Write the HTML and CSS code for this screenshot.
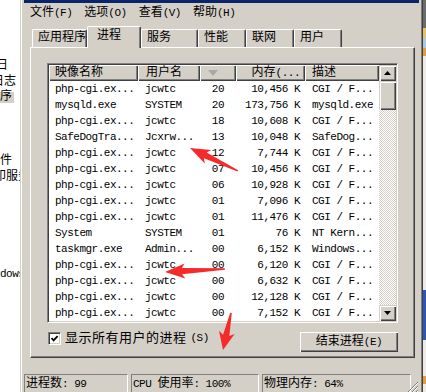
FILE: index.html
```html
<!DOCTYPE html>
<html>
<head>
    <title>Windows 任务管理器</title>
    <link rel="stylesheet" href="styles.css">
</head>
<body>
    <div class="behind">
        <div class="frag cut4">日</div>
        <div class="frag cut8">日志</div>
        <div class="frag"><span class="sel">序</span></div>
        <div class="frag gap-a">件</div>
        <div class="frag cut6">印服务</div>
        <div class="frag gap-b latin">dows</div>
    </div>

    <div class="window">
        <div class="titlebar"></div>

        <div class="menubar">
            <span>文件<span class="k">(F)</span></span>
            <span>选项<span class="k">(O)</span></span>
            <span>查看<span class="k">(V)</span></span>
            <span>帮助<span class="k">(H)</span></span>
        </div>

        <div class="tabs">
            <div class="tab t-app">应用程序</div>
            <div class="tab tab-on">进程</div>
            <div class="tab t-wide">服务</div>
            <div class="tab">性能</div>
            <div class="tab">联网</div>
            <div class="tab">用户</div>
        </div>

        <div class="panel">
            <div class="listbox">
                <div class="grid">
                    <div class="row head">
                        <div class="hc">映像名称</div>
                        <div class="hc">用户名</div>
                        <div class="hc sort">
                            <svg width="10" height="6" viewBox="0 0 10 6"><polygon points="0,0 10,0 5,6" fill="#a8a8a8"/></svg>
                        </div>
                        <div class="hc">内存<span class="k">(...</span></div>
                        <div class="hc">描述</div>
                    </div>
                    <div class="row"><span>php-cgi.ex...</span><span>jcwtc</span><span>20</span><span>10,456 K</span><span>CGI / F...</span></div>
                    <div class="row"><span>mysqld.exe</span><span>SYSTEM</span><span>20</span><span>173,756 K</span><span>mysqld.exe</span></div>
                    <div class="row"><span>php-cgi.ex...</span><span>jcwtc</span><span>18</span><span>10,608 K</span><span>CGI / F...</span></div>
                    <div class="row"><span>SafeDogTra...</span><span>Jcxrw...</span><span>13</span><span>10,048 K</span><span>SafeDog...</span></div>
                    <div class="row"><span>php-cgi.ex...</span><span>jcwtc</span><span>12</span><span>7,744 K</span><span>CGI / F...</span></div>
                    <div class="row"><span>php-cgi.ex...</span><span>jcwtc</span><span>07</span><span>10,456 K</span><span>CGI / F...</span></div>
                    <div class="row"><span>php-cgi.ex...</span><span>jcwtc</span><span>06</span><span>10,928 K</span><span>CGI / F...</span></div>
                    <div class="row"><span>php-cgi.ex...</span><span>jcwtc</span><span>01</span><span>7,096 K</span><span>CGI / F...</span></div>
                    <div class="row"><span>php-cgi.ex...</span><span>jcwtc</span><span>01</span><span>11,476 K</span><span>CGI / F...</span></div>
                    <div class="row"><span>System</span><span>SYSTEM</span><span>01</span><span>76 K</span><span>NT Kern...</span></div>
                    <div class="row"><span>taskmgr.exe</span><span>Admin...</span><span>00</span><span>6,152 K</span><span>Windows...</span></div>
                    <div class="row"><span>php-cgi.ex...</span><span>jcwtc</span><span>00</span><span>6,120 K</span><span>CGI / F...</span></div>
                    <div class="row"><span>php-cgi.ex...</span><span>jcwtc</span><span>00</span><span>6,632 K</span><span>CGI / F...</span></div>
                    <div class="row"><span>php-cgi.ex...</span><span>jcwtc</span><span>00</span><span>12,128 K</span><span>CGI / F...</span></div>
                    <div class="row"><span>php-cgi.ex...</span><span>jcwtc</span><span>00</span><span>7,152 K</span><span>CGI / F...</span></div>
                </div>
                <div class="scrollbar">
                    <div class="sbtn"><svg width="7" height="4" viewBox="0 0 7 4"><polygon points="3.5,0 7,4 0,4" fill="#000"/></svg></div>
                    <div class="thumb"></div>
                    <div class="track"></div>
                    <div class="sbtn"><svg width="7" height="4" viewBox="0 0 7 4"><polygon points="0,0 7,0 3.5,4" fill="#000"/></svg></div>
                </div>
            </div>

            <div class="controls">
                <label class="check">
                    <span class="box"><svg width="7" height="7" viewBox="0 0 7 7"><path d="M0.5 3 L2.6 5.3 L6.6 1" fill="none" stroke="#000" stroke-width="1.8"/></svg></span>
                    显示所有用户的进程<span class="k">(S)</span>
                </label>
                <button class="btn">结束进程<span class="k">(E)</span></button>
            </div>
        </div>

        <div class="status">
            <div class="pane p1">进程数<span class="k">: 99</span></div>
            <div class="pane p2"><span class="k">CPU </span>使用率<span class="k">: 100%</span></div>
            <div class="pane p3">物理内存<span class="k">: 64%</span></div>
            <div class="grip">
                <svg width="12" height="12" viewBox="0 0 12 12">
                    <path d="M11 1 L1 11 M11 5 L5 11 M11 9 L9 11" stroke="#808080" stroke-width="1"/>
                    <path d="M11 2 L2 11 M11 6 L6 11 M11 10 L10 11" stroke="#fff" stroke-width="1"/>
                </svg>
            </div>
        </div>
    </div>

    <div class="desk-edge"></div>

    <svg class="marks" width="426" height="392" viewBox="0 0 426 392">
        <polygon transform="translate(190 148) rotate(25.6)" points="0,0 20,7.5 17,3.2 53,0.7 53,-0.7 17,-3.2 20,-7.5" fill="#f52a2a"/>
        <polygon transform="translate(165 272) rotate(-2.9)" points="0,0 20,7.5 17,3.2 60,0.7 60,-0.7 17,-3.2 20,-7.5" fill="#f52a2a"/>
        <polygon transform="translate(223 350) rotate(-77.8)" points="0,0 18,8 15,3.2 38,0.8 38,-0.8 15,-3.2 18,-8" fill="#f52a2a"/>
    </svg>
</body>
</html>
```

FILE: styles.css
```css
* {
    box-sizing: border-box;
}

body {
    margin: 0;
    width: 426px;
    height: 392px;
    overflow: hidden;
    position: relative;
    display: flex;
    background: #fff;
    color: #000;
    font-family: "Liberation Mono", "Noto Sans CJK SC", monospace;
    font-size: 12px;
}

/* ascii parts of labels, narrow like the bitmap font */
.k {
    font-size: 11px;
    letter-spacing: -0.5px;
}

/* window lying behind, only its right edge shows */
.behind {
    flex: none;
    width: 20px;
    padding-top: 58px;
    overflow: hidden;
    white-space: nowrap;
    line-height: 16px;
}

.frag {
    height: 16px;
}

.cut4 { text-indent: -4px; }
.cut6 { text-indent: -6px; }
.cut8 { text-indent: -8px; }

.gap-a { margin-top: 47px; }
.gap-b { margin-top: 81px; }

.latin {
    font-size: 11px;
    letter-spacing: -0.5px;
}

.sel {
    display: inline-block;
    height: 11px;
    line-height: 11px;
    padding-right: 2px;
    background: #d4d0c8;
    vertical-align: middle;
}

/* task manager */
.window {
    flex: none;
    width: 403px;
    height: 392px;
    overflow: hidden;
    padding: 0 4px;
    display: flex;
    flex-direction: column;
    background: #d4d0c8;
    box-shadow: inset 1px 0 #d4d0c8, inset 2px 0 #fff, inset -1px 0 #404040, inset -2px 0 #808080;
}

.titlebar {
    flex: none;
    height: 3px;
    background: #0a246a;
}

.menubar {
    flex: none;
    height: 20px;
    display: flex;
    align-items: center;
    gap: 12px;
    padding-left: 6px;
    line-height: 20px;
}

.tabs {
    flex: none;
    height: 24px;
    display: flex;
    align-items: flex-end;
    padding-left: 8px;
}

.tab {
    width: 48px;
    height: 18px;
    padding-left: 5px;
    line-height: 16px;
    white-space: nowrap;
    background: #d4d0c8;
    border-top: 1px solid #fff;
    border-left: 1px solid #fff;
    border-right: 1px solid #404040;
    border-radius: 2px 2px 0 0;
    box-shadow: inset -1px 0 #808080;
}

.t-app { width: 55px; }
.t-wide { width: 57px; }

.tab-on {
    position: relative;
    z-index: 1;
    width: 54px;
    height: 22px;
    margin-bottom: -1px;
    padding-left: 9px;
    line-height: 19px;
}

.panel {
    flex: none;
    width: 385px;
    height: 311px;
    margin-left: 6px;
    padding: 15px 16px 0;
    border-top: 1px solid #fff;
    border-left: 1px solid #fff;
    border-right: 1px solid #404040;
    border-bottom: 1px solid #404040;
    box-shadow: inset -1px -1px #808080;
}

.listbox {
    width: 351px;
    height: 260px;
    display: flex;
    padding: 1px;
    background: #fff;
    border: 1px solid;
    border-color: #808080 #fff #fff #808080;
    box-shadow: inset 1px 1px #404040, inset -1px -1px #d4d0c8;
}

.grid {
    width: 330px;
}

.row {
    display: grid;
    grid-template-columns: 89px 62px 36px 69px 74px;
    height: 16px;
    line-height: 16px;
    white-space: nowrap;
    font-size: 11px;
    letter-spacing: -0.5px;
}

.row > :nth-child(1) { padding-left: 6px; }
.row > :nth-child(2) { padding-left: 7px; }
.row > :nth-child(3) { padding-right: 12px; text-align: right; }
.row > :nth-child(4) { padding-right: 5px; text-align: right; }
.row > :nth-child(5) { padding-left: 7px; }

.head {
    font-size: 12px;
    letter-spacing: 0;
}

.hc {
    height: 16px;
    overflow: hidden;
    background: #d4d0c8;
    box-shadow: inset 1px 1px #fff, inset -1px -1px #404040, inset -2px -2px #808080;
}

.head > :nth-child(2) { padding-left: 8px; }

.sort {
    display: flex;
    align-items: center;
    padding-left: 8px;
}

.scrollbar {
    width: 17px;
    display: flex;
    flex-direction: column;
}

.sbtn,
.thumb {
    flex: none;
    height: 16px;
    display: flex;
    align-items: center;
    justify-content: center;
    background: #d4d0c8;
    box-shadow: inset 1px 1px #d4d0c8, inset 2px 2px #fff, inset -1px -1px #404040, inset -2px -2px #808080;
}

.thumb {
    height: 29px;
}

.track {
    flex: 1;
    background: repeating-conic-gradient(#d4d0c8 0 25%, #fff 0 50%) 0 0 / 2px 2px;
}

.controls {
    display: flex;
    justify-content: space-between;
    align-items: flex-start;
    margin-top: 9px;
}

.check {
    display: flex;
    align-items: center;
    gap: 4px;
    height: 13px;
    margin-left: 1px;
    font-size: 13px;
    letter-spacing: 0.5px;
    line-height: 13px;
    white-space: nowrap;
}

.box {
    flex: none;
    width: 13px;
    height: 13px;
    padding: 1px;
    display: flex;
    align-items: center;
    justify-content: center;
    background: #fff;
    border: 1px solid;
    border-color: #808080 #fff #fff #808080;
    box-shadow: inset 1px 1px #404040, inset -1px -1px #d4d0c8;
}

.btn {
    width: 98px;
    height: 20px;
    margin: 0;
    padding: 0;
    border: 0;
    background: #d4d0c8;
    color: #000;
    font-family: inherit;
    font-size: 12px;
    line-height: 20px;
    box-shadow: inset 1px 1px #fff, inset -1px -1px #404040, inset -2px -2px #808080;
}

.status {
    flex: none;
    height: 19px;
    margin-top: 16px;
    display: flex;
    gap: 3px;
}

.pane {
    flex: none;
    height: 19px;
    padding-left: 1px;
    line-height: 18px;
    white-space: nowrap;
    border: 1px solid;
    border-color: #808080 #fff #fff #808080;
}

.p1 { width: 104px; }
.p2 { width: 128px; }
.p3 { width: 149px; }

.grip {
    flex: none;
    width: 12px;
    height: 12px;
    margin-left: -7px;
    align-self: flex-end;
}

.desk-edge {
    flex: none;
    width: 3px;
    background: linear-gradient(#6c6c6c 0 28px, #e8c060 28px 38px, #a8c8e8 38px 48px, #e89a40 48px 56px,
        #ecebe4 56px 290px, #2857b4 290px 340px, #ecebe4 340px 376px, #e89a40 376px 384px, #ecebe4 384px);
}

/* red marks drawn over the screenshot */
.marks {
    position: absolute;
    left: 0;
    top: 0;
    pointer-events: none;
}
```
